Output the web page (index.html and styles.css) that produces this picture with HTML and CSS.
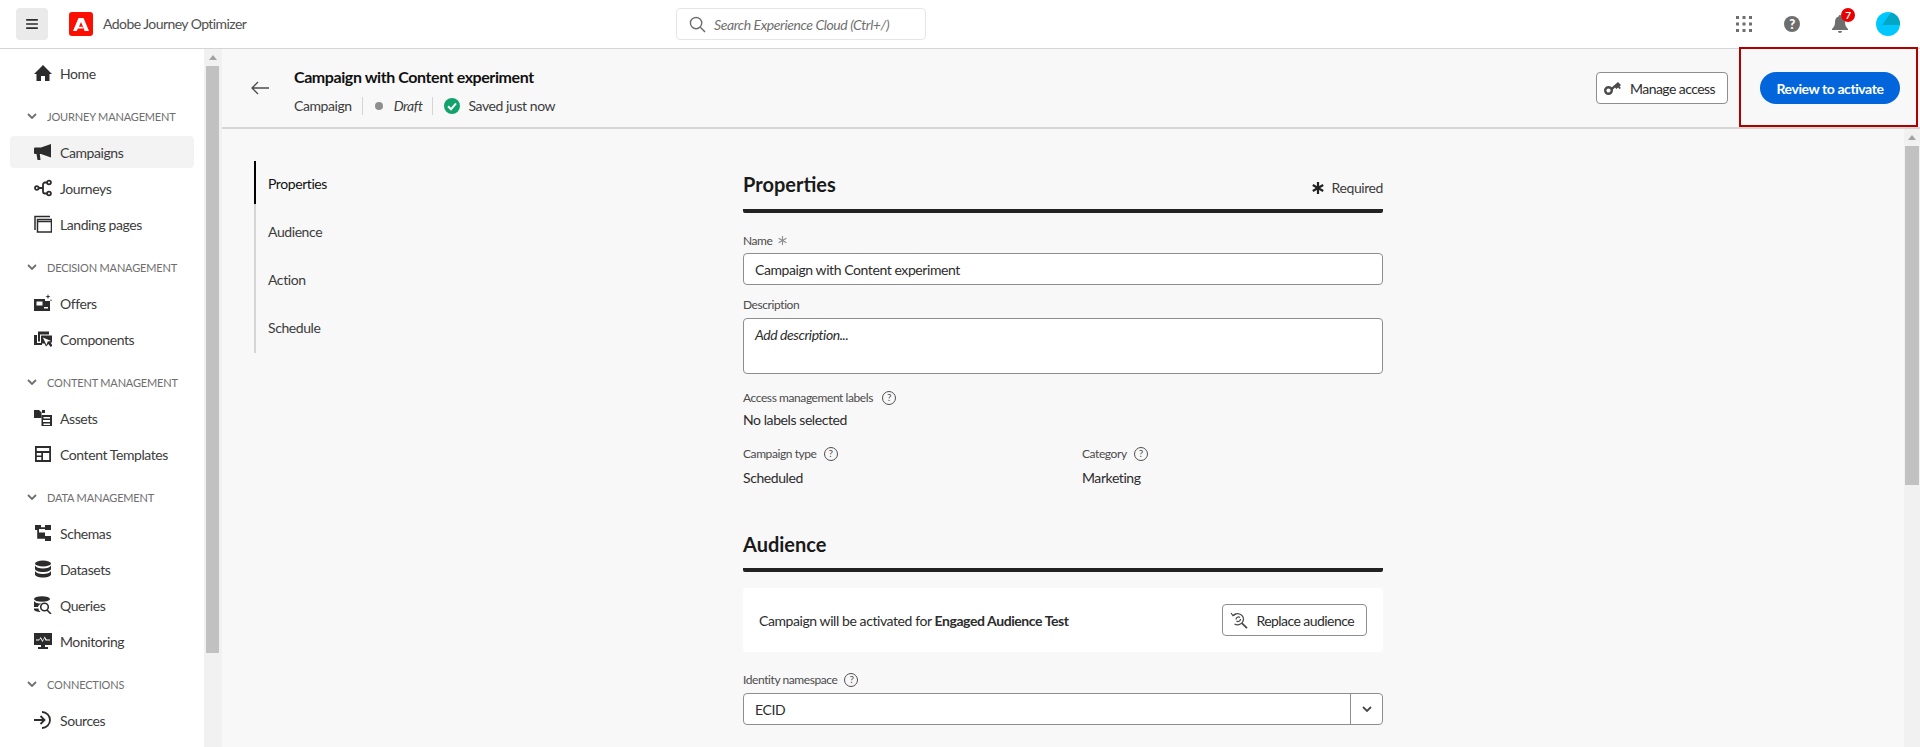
FILE: index.html
```html
<!DOCTYPE html>
<html lang="en">
<head>
  <meta charset="UTF-8" />
  <meta name="viewport" content="width=device-width, initial-scale=1.0"/>
  <title>Adobe Journey Optimizer</title>
  <link rel="stylesheet" href="styles.css">
</head>
<body>
  <div id="app">
    <div id="topbar">
      <div class="topbar-left">
        <button class="menu-btn" aria-label="Menu">
          <svg viewBox="0 0 14 12" width="12" height="10"><path d="M0 0h14v2H0zM0 5h14v2H0zM0 10h14v2H0z"/></svg>
        </button>
        <svg class="logo" viewBox="0 0 24 24"><rect width="24" height="24" rx="3" fill="#fa0f00"/><path d="M9.500 6h5L20 19h-4.300L12 10l-2 4.700h3.200l1.200 1.800-.1 0H8.800L7.800 19H4z" fill="#fff"/></svg>
        <span class="app-name">Adobe Journey Optimizer</span>
      </div>
      <div class="search">
        <svg viewBox="0 0 18 18" width="17" height="17"><circle cx="7.500" cy="7.500" r="6" fill="none" stroke="#6e6e6e" stroke-width="1.500"/><path d="M12 12l5 5" stroke="#6e6e6e" stroke-width="1.600"/></svg>
        <span>Search Experience Cloud (Ctrl+/)</span>
      </div>
      <div class="topbar-right">
        <svg class="grid-icon" viewBox="0 0 16 16" width="16" height="16"><path d="M0 0h3v3H0zM6.500 0h3v3h-3zM13 0h3v3h-3zM0 6.500h3v3H0zM6.500 6.500h3v3h-3zM13 6.500h3v3h-3zM0 13h3v3H0zM6.500 13h3v3h-3zM13 13h3v3h-3z"/></svg>
        <span class="help-icon">?</span>
        <span class="bell">
          <svg viewBox="0 0 16 18" width="16" height="18"><path d="M8 0a1.300 1.300 0 0 1 1.300 1.400C12 2 13 4.400 13 7c0 3.500 1 5 3 7v1H0v-1c2-2 3-3.500 3-7 0-2.600 1-5 3.700-5.600A1.300 1.300 0 0 1 8 0zM6 16h4a2 2 0 0 1-4 0z" fill="#6e6e6e"/></svg>
          <span class="badge">7</span>
        </span>
        <svg class="avatar" viewBox="0 0 24 24" width="24" height="24"><circle cx="12" cy="12" r="12" fill="#00c8ff"/><path d="M15 .4A12 12 0 0 1 24 12v1H6z" fill="#00a6c4"/></svg>
      </div>
    </div>

    <div id="body">
      <div id="sidebar">
        <div class="nav">
          <a class="nav-item">
            <svg viewBox="0 0 18 18"><path d="M9 1L0 10h2.500v7h4.500v-5h4v5h4.500v-7H18z"/></svg>Home
          </a>
          <div class="nav-group"><svg viewBox="0 0 10 6"><path d="M1 1l4 4 4-4" fill="none" stroke="#6e6e6e" stroke-width="1.800"/></svg>Journey Management</div>
          <a class="nav-item selected">
            <svg viewBox="0 0 18 18"><path d="M17 1L7 4.500H1a1 1 0 0 0-1 1V10a1 1 0 0 0 1 1h1.500l1 6h3L5.800 11H7l10 3.500z"/></svg>Campaigns
          </a>
          <a class="nav-item">
            <svg class="line" viewBox="0 0 18 18"><circle cx="2.800" cy="9" r="1.800"/><circle cx="15" cy="3.500" r="1.900"/><circle cx="15" cy="14.500" r="1.900"/><path d="M5 9h4M13 3.500h-2a2 2 0 0 0-2 2v7a2 2 0 0 0 2 2h2"/></svg>Journeys
          </a>
          <a class="nav-item">
            <svg class="line thin" viewBox="0 0 18 18"><path d="M1 15V1.500h15"/><rect x="3.500" y="4.500" width="14" height="12.500"/><path d="M3.500 6.500h14"/></svg>Landing pages
          </a>
          <div class="nav-group"><svg viewBox="0 0 10 6"><path d="M1 1l4 4 4-4" fill="none" stroke="#6e6e6e" stroke-width="1.800"/></svg>Decision Management</div>
          <a class="nav-item">
            <svg viewBox="0 0 18 18"><path d="M0 5h11v2h5v10H0zM2.500 7.500v4h6v-4zM10 13v1.500h4V13z" fill-rule="evenodd"/><path d="M14 0l.6 2 2 .6-2 .6-.6 2-.6-2-2-.6 2-.6zM17 5l.4 1 .6.300-.6.300-.4 1-.4-1-.6-.3.6-.3z"/></svg>Offers
          </a>
          <a class="nav-item">
            <svg viewBox="0 0 18 18"><path d="M0 5h3v8h5v2H0z"/><path d="M4 1.500h11v3H6v7H4z"/><path d="M7 5.500h11v7h-1.500l2 3-2 1.500-2-3-2.500 2.500-1.500-3H7zM8.800 7.500l3.700 7.500 1.200-3.500 3.500-.5z" fill-rule="evenodd"/></svg>Components
          </a>
          <div class="nav-group"><svg viewBox="0 0 10 6"><path d="M1 1l4 4 4-4" fill="none" stroke="#6e6e6e" stroke-width="1.800"/></svg>Content Management</div>
          <a class="nav-item">
            <svg viewBox="0 0 18 18"><path d="M0 1h5l2 2 .5-.500V9H0z"/><path d="M8 1h3v3H8z"/><path d="M7.500 6H18v11H7.500zM9.500 8v1.500h6.500V8zM9 11v2h7v-2zM9.500 14.500V16h6.500v-1.500z" fill-rule="evenodd"/></svg>Assets
          </a>
          <a class="nav-item">
            <svg viewBox="0 0 18 18"><path d="M1 1h16v16H1zM2.800 3v3h12.400V3zM2.800 8v2.500h4.500V8zM9 8v7h6.200V8zM2.800 12v3h4.500v-3z" fill-rule="evenodd"/></svg>Content Templates
          </a>
          <div class="nav-group"><svg viewBox="0 0 10 6"><path d="M1 1l4 4 4-4" fill="none" stroke="#6e6e6e" stroke-width="1.800"/></svg>Data Management</div>
          <a class="nav-item">
            <svg viewBox="0 0 18 18"><path d="M1 1h6v2.200h4V1h6v5h-6V5H5v3.500h6V7.500v4.500h6v5h-6v-2.200H3.200V6H1z"/></svg>Schemas
          </a>
          <a class="nav-item">
            <svg viewBox="0 0 18 18"><ellipse cx="9" cy="3.500" rx="8" ry="3"/><path d="M1 5.500c1 2 4 3 8 3s7-1 8-3V9c0 1.500-3 3-8 3s-8-1.500-8-3zM1 11c1 2 4 3 8 3s7-1 8-3v3.500c0 1.500-3 3-8 3s-8-1.500-8-3z"/></svg>Datasets
          </a>
          <a class="nav-item">
            <svg viewBox="0 0 18 18"><ellipse cx="8" cy="3" rx="8" ry="2.800"/><path d="M0 5c1 2 4 2.500 8 2.500-3 1-4 2.500-4 3.500H0zM0 12.500h4.500c0 1.500 1 2.500 2 3.500-3 0-6.500-1-6.500-2.500z"/><circle class="hollow" cx="10.500" cy="11" r="3.800"/><path class="hollow" d="M13 14l4 4"/></svg>Queries
          </a>
          <a class="nav-item">
            <svg viewBox="0 0 18 18"><path d="M0 1h18v12h-7v2h3v2H4v-2h3v-2H0zM2 7.500v1h3l1.500-2 2 3.500 2-4 1 2.500H16v-1h-3.500l-1.800-3-2 4-2-3.500-1.500 2.500z" fill-rule="evenodd"/></svg>Monitoring
          </a>
          <div class="nav-group"><svg viewBox="0 0 10 6"><path d="M1 1l4 4 4-4" fill="none" stroke="#6e6e6e" stroke-width="1.800"/></svg>Connections</div>
          <a class="nav-item">
            <svg class="line" viewBox="0 0 18 18"><path d="M0 9h10M6.500 5l4 4-4 4"/><path d="M8 1a8 8 0 0 1 0 16"/></svg>Sources
          </a>
        </div>
      </div>
      <div class="scrollbar side-scroll">
        <span class="arrow"></span>
        <div class="thumb"></div>
      </div>

      <div id="page">
        <div class="page-header">
          <svg class="back" viewBox="0 0 18 14" width="18" height="14"><path d="M18 7H1M7 1L1 7l6 6" fill="none" stroke="#4b4b4b" stroke-width="1.300"/></svg>
          <div class="page-title">
            <h1>Campaign with Content experiment</h1>
            <div class="page-meta">
              <span>Campaign</span>
              <span class="sep"></span>
              <span class="dot"></span>
              <em>Draft</em>
              <span class="sep"></span>
              <svg viewBox="0 0 16 16" width="16" height="16"><circle cx="8" cy="8" r="8" fill="#12a26c"/><path d="M4 8.300l3 3 5-6" fill="none" stroke="#fff" stroke-width="2"/></svg>
              <span class="saved">Saved just now</span>
            </div>
          </div>
          <div class="page-actions">
            <button class="btn">
              <svg viewBox="0 0 18 14" width="18" height="14"><circle cx="4.500" cy="9.500" r="3.300" fill="none" stroke="#4b4b4b" stroke-width="2.400"/><path d="M7 7l7-6 3 3-1.500 1.500L17 7l-1.500 1L14 6.500 12.500 8 11 6.500 8.500 9z" fill="#4b4b4b"/></svg>
              Manage access
            </button>
            <button class="btn-primary">Review to activate</button>
          </div>
        </div>

        <div class="page-body">
          <div class="page-scroll">
            <div class="steps">
              <a class="step active">Properties</a>
              <a class="step">Audience</a>
              <a class="step">Action</a>
              <a class="step">Schedule</a>
            </div>

            <div class="form">
              <div class="section-head first">
                <h2>Properties</h2>
                <span class="required">
                  <svg viewBox="0 0 12 12" width="12" height="12"><path d="M6 0v12M.8 3l10.400 6M.8 9l10.400-6" stroke="#222" stroke-width="2.200" fill="none"/></svg>
                  Required
                </span>
              </div>

              <label class="field-label name-label">Name
                <svg viewBox="0 0 12 12" width="9" height="9"><path d="M6 0v12M.8 3l10.400 6M.8 9l10.400-6" stroke="#8e8e8e" stroke-width="1.500" fill="none"/></svg>
              </label>
              <div class="input">Campaign with Content experiment</div>

              <label class="field-label desc-label">Description</label>
              <div class="input textarea"><em>Add description...</em></div>

              <label class="field-label info-label access-label">Access management labels <span class="help">?</span></label>
              <div class="value">No labels selected</div>

              <div class="two-col">
                <div class="col">
                  <label class="field-label info-label">Campaign type <span class="help">?</span></label>
                  <div class="value">Scheduled</div>
                </div>
                <div class="col">
                  <label class="field-label info-label">Category <span class="help">?</span></label>
                  <div class="value">Marketing</div>
                </div>
              </div>

              <div class="section-head">
                <h2>Audience</h2>
              </div>

              <div class="audience-card">
                <span>Campaign will be activated for <b>Engaged Audience Test</b></span>
                <button class="btn">
                  <svg viewBox="0 0 18 18" width="18" height="18" fill="none" stroke="#4b4b4b" stroke-width="1.200"><path d="M3.200 4.500A6 6 0 0 1 13.500 8a6 6 0 0 1-9 5"/><path d="M11.800 12.200l5.200 5" stroke-width="1.800"/><path d="M1 2l2 2.800 2.800-1.800M6 8.500a2.500 2.500 0 0 1 4-2M10.500 8a2.500 2.500 0 0 1-4 2"/></svg>
                  Replace audience
                </button>
              </div>

              <label class="field-label info-label ns-label">Identity namespace <span class="help">?</span></label>
              <div class="select">
                <span>ECID</span>
                <span class="select-btn"><svg viewBox="0 0 10 6" width="10" height="6"><path d="M1 1l4 4 4-4" fill="none" stroke="#4b4b4b" stroke-width="1.800"/></svg></span>
              </div>
            </div>
          </div>
          <div class="scrollbar main-scroll">
            <span class="arrow"></span>
            <div class="thumb"></div>
          </div>
        </div>
      </div>
    </div>

    <div class="highlight"></div>
  </div>
</body>
</html>
```

FILE: styles.css
```css
* {
  box-sizing: border-box;
  margin: 0;
  padding: 0;
}
body {
  font-family: 'Lato', 'Open Sans', sans-serif;
  font-size: 14px;
  letter-spacing: -0.03em;
  color: #2c2c2c;
  background: #fff;
  height: 100vh;
  overflow: hidden;
}
button {
  font-family: inherit;
  letter-spacing: inherit;
}
#app {
  position: relative;
  display: flex;
  flex-direction: column;
  height: 100%;
}

/* top bar */
#topbar {
  height: 49px;
  flex: none;
  display: flex;
  align-items: center;
  justify-content: space-between;
  padding: 0 20px 1px 16px;
  background: #fff;
  border-bottom: 1px solid #d5d5d5;
  position: relative;
}
.topbar-left {
  display: flex;
  align-items: center;
}
.menu-btn {
  width: 32px;
  height: 32px;
  border: none;
  border-radius: 4px;
  background: #eaeaea;
  display: flex;
  align-items: center;
  justify-content: center;
}
.menu-btn svg {
  fill: #2c2c2c;
}
.logo {
  width: 24px;
  height: 24px;
  margin-left: 21px;
}
.app-name {
  margin-left: 10px;
  font-size: 14px;
  letter-spacing: -0.04em;
  color: #505050;
}
.search {
  position: absolute;
  left: 676px;
  top: 8px;
  width: 250px;
  height: 32px;
  display: flex;
  align-items: center;
  gap: 8px;
  padding-left: 12px;
  border: 1px solid #e6e6e6;
  border-radius: 4px;
  font-style: italic;
  color: #707070;
}
.topbar-right {
  display: flex;
  align-items: center;
}
.grid-icon {
  fill: #6e6e6e;
  margin-right: 32px;
}
.help-icon {
  width: 16px;
  height: 16px;
  border-radius: 50%;
  background: #6e6e6e;
  color: #fff;
  font-size: 13px;
  font-weight: 900;
  line-height: 16px;
  text-align: center;
  margin-right: 32px;
}
.bell {
  position: relative;
  display: block;
  height: 18px;
  margin-right: 28px;
}
.badge {
  position: absolute;
  left: 9px;
  top: -7px;
  width: 14px;
  height: 14px;
  border-radius: 50%;
  background: #e60000;
  color: #fff;
  font-size: 10px;
  font-weight: 700;
  line-height: 14px;
  text-align: center;
}

#body {
  flex: 1;
  min-height: 0;
  display: flex;
}

/* left navigation */
#sidebar {
  width: 204px;
  flex: none;
  overflow: hidden;
  background: #fff;
}
.nav {
  padding: 8px 10px 0;
}
.nav-item {
  display: flex;
  align-items: center;
  height: 32px;
  margin-bottom: 4px;
  padding-left: 24px;
  border-radius: 4px;
  color: #3c3c3c;
  font-size: 14px;
}
.nav-item svg {
  width: 18px;
  height: 18px;
  margin-right: 8px;
  fill: #2c2c2c;
  flex: none;
}
.nav-item svg.line {
  fill: none;
  stroke: #2c2c2c;
  stroke-width: 1.8;
}
.nav-item svg.thin {
  stroke-width: 1.5;
}
.nav-item svg .hollow {
  fill: none;
  stroke: #2c2c2c;
  stroke-width: 1.6;
}
.nav-item.selected {
  background: #f3f3f3;
}
.nav-group {
  display: flex;
  align-items: center;
  height: 18px;
  margin: 18px 0 11px;
  padding-left: 17px;
  font-size: 11px;
  letter-spacing: -0.015em;
  text-transform: uppercase;
  color: #6e6e6e;
}
.nav-group svg {
  width: 10px;
  height: 6px;
  margin-right: 10px;
}

/* fake native scrollbars */
.scrollbar {
  flex: none;
  position: relative;
  background: #f1f1f1;
}
.scrollbar .arrow {
  position: absolute;
  top: 6px;
  left: 50%;
  margin-left: -4px;
  border: 4px solid transparent;
  border-top: none;
  border-bottom: 5px solid #a3a3a3;
}
.scrollbar .thumb {
  position: absolute;
  top: 17px;
  background: #c1c1c1;
}
.side-scroll {
  width: 18px;
}
.side-scroll .thumb {
  left: 2px;
  width: 13px;
  height: 587px;
}
.main-scroll {
  width: 16px;
}
.main-scroll .thumb {
  left: 1px;
  width: 14px;
  height: 339px;
}

/* campaign page */
#page {
  flex: 1;
  min-width: 0;
  display: flex;
  flex-direction: column;
  background: #f8f8f8;
}
.page-header {
  height: 80px;
  flex: none;
  display: flex;
  align-items: center;
  padding: 0 20px 0 29px;
  border-bottom: 2px solid #d5d5d5;
}
.back {
  margin-right: 25px;
}
.page-title {
  padding-top: 5px;
}
.page-title h1 {
  font-size: 16px;
  font-weight: 700;
  color: #111;
  line-height: 20px;
}
.page-meta {
  display: flex;
  align-items: center;
  margin-top: 10px;
  height: 18px;
  color: #3c3c3c;
}
.page-meta .sep {
  width: 1px;
  height: 18px;
  background: #d5d5d5;
  margin: 0 11px 0 10px;
}
.page-meta .dot {
  width: 8px;
  height: 8px;
  border-radius: 50%;
  background: #8e8e8e;
  margin: 0 11px 0 1px;
}
.page-meta .saved {
  margin-left: 8px;
}
.page-actions {
  margin-left: auto;
  display: flex;
  align-items: center;
  gap: 32px;
}
.btn {
  height: 32px;
  display: flex;
  align-items: center;
  gap: 8px;
  padding: 0 12px 0 7px;
  border: 1px solid #8e8e8e;
  border-radius: 4px;
  background: #fff;
  color: #2c2c2c;
  font-size: 14px;
  letter-spacing: -0.04em;
}
.btn-primary {
  width: 140px;
  height: 32px;
  border: none;
  border-radius: 16px;
  background: #0265dc;
  color: #fff;
  font-size: 14px;
  font-weight: 700;
}
.page-body {
  flex: 1;
  min-height: 0;
  display: flex;
}
.page-scroll {
  flex: 1;
  min-width: 0;
  overflow: hidden;
  display: flex;
  padding: 32px 0 0 32px;
}

/* step list */
.steps {
  width: 200px;
  height: 192px;
  flex: none;
  border-left: 2px solid #d5d5d5;
  position: relative;
}
.step {
  display: flex;
  align-items: center;
  height: 48px;
  padding: 0 0 4px 12px;
  font-size: 14px;
  color: #3c3c3c;
}
.step.active {
  color: #111;
  position: relative;
}
.step.active::before {
  content: '';
  position: absolute;
  left: -2px;
  top: 0;
  width: 2px;
  height: 43px;
  background: #000;
}

/* form */
.form {
  width: 640px;
  margin-left: 289px;
  flex: none;
}
.section-head {
  height: 49px;
  display: flex;
  align-items: center;
  justify-content: space-between;
  margin-top: 35px;
  padding: 4px 0 7px;
  border-bottom: 4px solid #222;
  border-radius: 0 0 2px 2px;
}
.section-head.first {
  margin-top: -1px;
  height: 53px;
  padding-top: 6px;
}
.section-head h2 {
  font-size: 20px;
  font-weight: 700;
  letter-spacing: 0;
  color: #1a1a1a;
}
.required {
  display: flex;
  align-items: center;
  gap: 8px;
  margin-top: 7px;
  font-size: 14px;
  color: #3c3c3c;
}
.field-label {
  display: block;
  font-size: 12px;
  line-height: 16px;
  color: #4b4b4b;
}
.name-label {
  margin-top: 20px;
}
.name-label svg {
  margin-left: 3px;
}
.input {
  height: 32px;
  margin-top: 4px;
  padding: 0 11px;
  display: flex;
  align-items: center;
  background: #fff;
  border: 1px solid #8e8e8e;
  border-radius: 4px;
}
.textarea {
  height: 56px;
  margin-top: 5px;
  align-items: flex-start;
  padding-top: 7px;
}
.desc-label {
  margin-top: 12px;
}
.info-label {
  display: flex;
  align-items: center;
  gap: 7px;
}
.access-label {
  margin-top: 16px;
  gap: 9px;
}
.help {
  width: 14px;
  height: 14px;
  border: 1.500px solid #505050;
  border-radius: 50%;
  font-size: 10px;
  line-height: 11px;
  text-align: center;
  color: #505050;
}
.value {
  margin-top: 4px;
  line-height: 20px;
  color: #2c2c2c;
}
.two-col {
  display: flex;
  margin-top: 16px;
}
.col {
  width: 339px;
  flex: none;
}
.col .value {
  margin-top: 6px;
}
.col + .col {
  width: 301px;
}
.audience-card {
  height: 64px;
  margin-top: 16px;
  display: flex;
  align-items: center;
  justify-content: space-between;
  padding: 0 16px;
  background: #fff;
  border-radius: 4px;
}
.ns-label {
  margin-top: 20px;
}
.select {
  height: 32px;
  margin-top: 5px;
  display: flex;
  align-items: center;
  justify-content: space-between;
  padding-left: 11px;
  background: #fff;
  border: 1px solid #8e8e8e;
  border-radius: 4px;
}
.select-btn {
  width: 32px;
  height: 100%;
  display: flex;
  align-items: center;
  justify-content: center;
  border-left: 1px solid #8e8e8e;
}

/* screenshot annotation */
.highlight {
  position: absolute;
  left: 1739px;
  top: 47px;
  width: 179px;
  height: 80px;
  border: 2px solid #b00000;
}
```
